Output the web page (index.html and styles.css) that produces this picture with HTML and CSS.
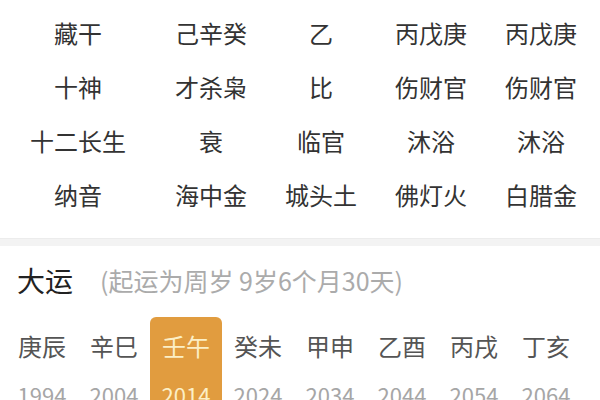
FILE: index.html
```html
<!DOCTYPE html>
<html lang="zh-CN">
<head>
<meta charset="utf-8">
<title>八字排盘</title>
<link rel="stylesheet" href="styles.css">
</head>
<body>
<div class="page">
  <div class="table">
    <div class="cell label">藏干</div><div class="cell">己辛癸</div><div class="cell">乙</div><div class="cell">丙戊庚</div><div class="cell">丙戊庚</div>
    <div class="cell label">十神</div><div class="cell">才杀枭</div><div class="cell">比</div><div class="cell">伤财官</div><div class="cell">伤财官</div>
    <div class="cell label">十二长生</div><div class="cell">衰</div><div class="cell">临官</div><div class="cell">沐浴</div><div class="cell">沐浴</div>
    <div class="cell label">纳音</div><div class="cell">海中金</div><div class="cell">城头土</div><div class="cell">佛灯火</div><div class="cell">白腊金</div>
  </div>
  <div class="divider"></div>
  <div class="dayun-head">
    <span class="dayun-title">大运</span>
    <span class="dayun-sub">(起运为周岁 9岁6个月30天)</span>
  </div>
  <div class="dayun-list">
    <div class="dy"><div class="gz">庚辰</div><div class="yr">1994</div></div>
    <div class="dy"><div class="gz">辛巳</div><div class="yr">2004</div></div>
    <div class="dy active"><div class="gz">壬午</div><div class="yr">2014</div></div>
    <div class="dy"><div class="gz">癸未</div><div class="yr">2024</div></div>
    <div class="dy"><div class="gz">甲申</div><div class="yr">2034</div></div>
    <div class="dy"><div class="gz">乙酉</div><div class="yr">2044</div></div>
    <div class="dy"><div class="gz">丙戌</div><div class="yr">2054</div></div>
    <div class="dy"><div class="gz">丁亥</div><div class="yr">2064</div></div>
  </div>
</div>
</body>
</html>
```
FILE: styles.css
```css
html, body {
  margin: 0;
  padding: 0;
  background: #ffffff;
}
body {
  font-family: "Noto Sans CJK SC", "Noto Sans", sans-serif;
  width: 600px;
  height: 400px;
  overflow: hidden;
}
.page {
  display: flex;
  flex-direction: column;
}
.table {
  display: grid;
  grid-template-columns: 156px repeat(4, 110px);
  padding-top: 6px;
}
.cell {
  height: 54px;
  line-height: 54px;
  text-align: center;
  font-size: 24px;
  color: #333333;
  white-space: nowrap;
}
.divider {
  margin-top: 16px;
  height: 7px;
  background: #f3f3f3;
  border-top: 1px solid #ececec;
}
.dayun-head {
  display: flex;
  align-items: center;
  padding-left: 17px;
  margin-top: 14px;
  height: 40px;
}
.dayun-title {
  font-size: 28px;
  color: #222222;
}
.dayun-sub {
  margin-left: 27px;
  font-size: 25px;
  color: #ababab;
  white-space: nowrap;
}
.dayun-list {
  display: flex;
  padding-left: 6px;
  margin-top: 17px;
}
.dy {
  width: 72px;
  height: 90px;
  text-align: center;
  padding-top: 17px;
  box-sizing: border-box;
  border-radius: 6px 6px 0 0;
}
.gz {
  font-size: 24px;
  line-height: 24px;
  color: #555555;
}
.yr {
  margin-top: 22px;
  font-size: 22px;
  line-height: 28px;
  color: #a6a6a6;
}
.dy.active {
  background: #e19c3f;
}
.dy.active .gz,
.dy.active .yr {
  color: #fcefc6;
}
```
